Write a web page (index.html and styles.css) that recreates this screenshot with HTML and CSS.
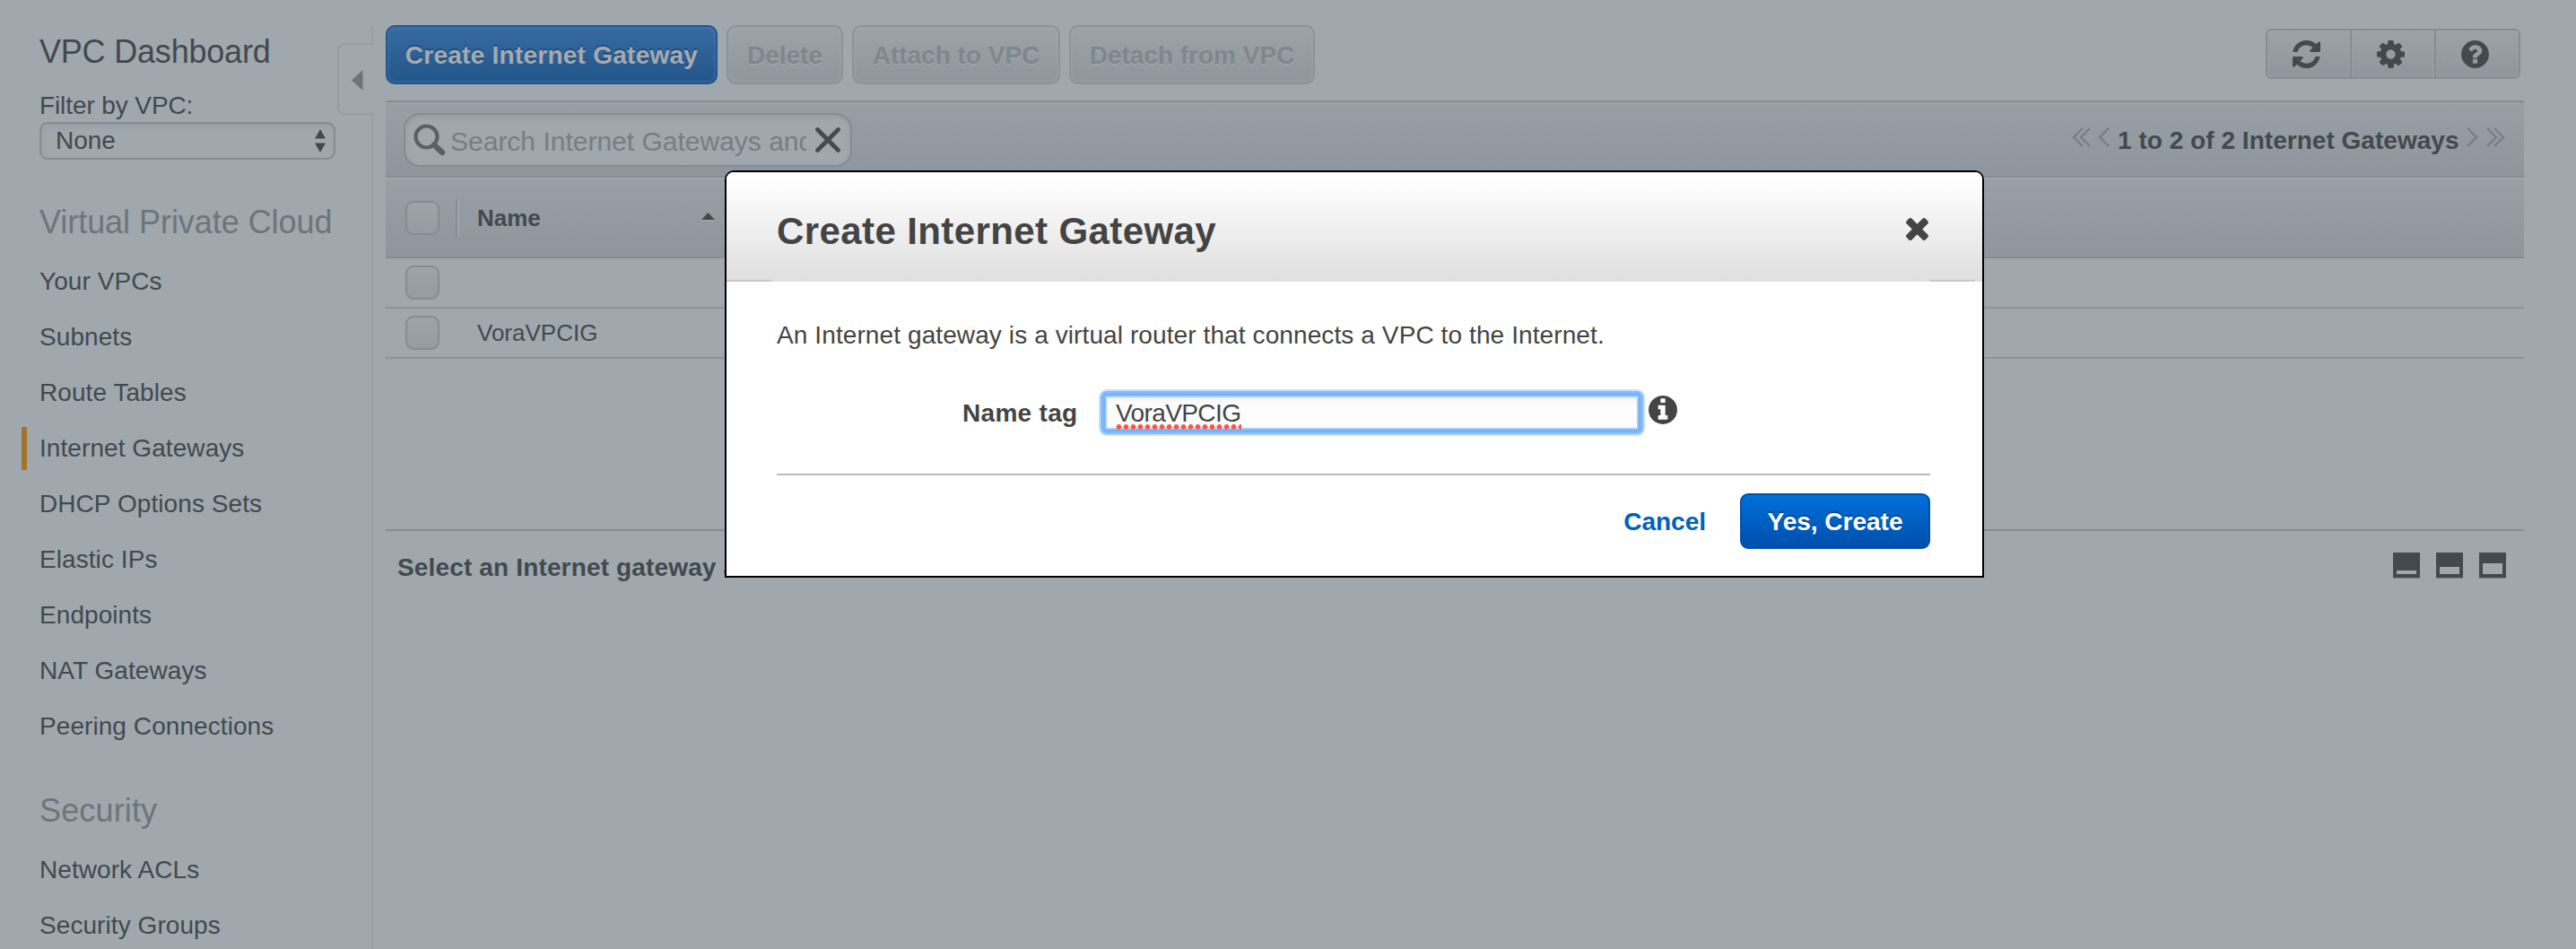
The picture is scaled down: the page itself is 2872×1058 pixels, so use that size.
FILE: index.html
```html
<!DOCTYPE html>
<html lang="en">
<head>
<meta charset="utf-8">
<title>VPC Dashboard</title>
<link rel="stylesheet" href="styles.css">
</head>
<body>
<div class="app">
  <aside class="sidebar">
    <div class="title">VPC Dashboard</div>
    <div class="filter-label">Filter by VPC:</div>
    <div class="select"><span>None</span>
      <svg width="14" height="26" viewBox="0 0 14 26"><path d="M7 0 13 10.500H1ZM1 15.500H13L7 26Z" fill="#42494f"/></svg>
    </div>
    <div class="collapse"><svg width="13" height="23" viewBox="0 0 13 23"><path d="M12.500 0V23L0 11.500Z" fill="#6d757c"/></svg></div>
    <h2 class="heading cloud">Virtual Private Cloud</h2>
    <nav class="nav">
      <a>Your VPCs</a>
      <a>Subnets</a>
      <a>Route Tables</a>
      <a class="active">Internet Gateways</a>
      <a>DHCP Options Sets</a>
      <a>Elastic IPs</a>
      <a>Endpoints</a>
      <a>NAT Gateways</a>
      <a>Peering Connections</a>
    </nav>
    <h2 class="heading security">Security</h2>
    <nav class="nav">
      <a>Network ACLs</a>
      <a>Security Groups</a>
    </nav>
  </aside>

  <main class="main">
    <div class="actions">
      <button class="btn primary">Create Internet Gateway</button>
      <button class="btn delete">Delete</button>
      <button class="btn attach">Attach to VPC</button>
      <button class="btn detach">Detach from VPC</button>
      <div class="tools">
        <span class="tool"><svg width="31" height="31" viewBox="0 0 1536 1536"><path d="M1511 928q0 5-1 7-64 268-268 434.500t-478 166.500q-146 0-282.500-55t-243.500-157l-129 129q-19 19-45 19t-45-19-19-45v-448q0-26 19-45t45-19h448q26 0 45 19t19 45-19 45l-137 137q71 66 161 102t187 36q134 0 250-65t186-179q11-17 53-117 8-23 30-23h192q13 0 22.500 9.500t9.500 22.500zm25-800v448q0 26-19 45t-45 19h-448q-26 0-45-19t-19-45 19-45l138-138q-148-137-349-137-134 0-250 65t-186 179q-11 17-53 117-8 23-30 23h-199q-13 0-22.500-9.500t-9.500-22.500v-7q65-268 270-434.500t480-166.500q146 0 284 55.500t245 156.500l130-129q19-19 45-19t45 19 19 45z"/></svg></span>
        <span class="tool"><svg width="31" height="31" viewBox="128 128 1536 1536"><path d="M1152 896q0-106-75-181t-181-75-181 75-75 181 75 181 181 75 181-75 75-181zm512-109v222q0 12-8 23t-20 13l-185 28q-19 54-39 91 35 50 107 138 10 12 10 25t-9 23q-27 37-99 108t-94 71q-12 0-26-9l-138-108q-44 23-91 38-16 136-29 186-7 28-36 28h-222q-14 0-24.500-8.500t-11.500-21.500l-28-184q-49-16-90-37l-141 107q-10 9-25 9-14 0-25-11-126-114-165-168-7-10-7-23 0-12 8-23 15-21 51-66.500t54-70.500q-27-50-41-99l-183-27q-13-2-21-12.500t-8-23.500v-222q0-12 8-23t19-13l186-28q14-46 39-92-40-57-107-138-10-12-10-24 0-10 9-23 26-36 98.500-107.500t94.500-71.500q13 0 26 10l138 107q44-23 91-38 16-136 29-186 7-28 36-28h222q14 0 24.500 8.500t11.500 21.500l28 184q49 16 90 37l142-107q9-9 24-9 13 0 25 10 129 119 165 170 7 8 7 22 0 12-8 23-15 21-51 66.500t-54 70.500q26 50 41 98l183 28q13 2 21 12.500t8 23.500z"/></svg></span>
        <span class="tool"><svg width="31" height="31" viewBox="128 128 1536 1536"><path d="M1024 1376v-192q0-14-9-23t-23-9h-192q-14 0-23 9t-9 23v192q0 14 9 23t23 9h192q14 0 23-9t9-23zm256-672q0-88-55.500-163t-138.500-116-170-41q-243 0-371 213-15 24 8 42l132 100q7 6 19 6 16 0 25-12 53-68 86-92 34-24 86-24 48 0 85.500 26t37.500 59q0 38-20 61t-68 45q-63 28-115.500 86.500t-52.500 125.500v36q0 14 9 23t23 9h192q14 0 23-9t9-23q0-19 21.500-49.500t54.500-49.500q32-18 49-28.500t46-35 44.500-48 28-60.500 12.500-81zm384 192q0 209-103 385.500t-279.500 279.500-385.500 103-385.500-103-279.500-279.500-103-385.500 103-385.500 279.500-279.500 385.500-103 385.500 103 279.500 279.500 103 385.500z"/></svg></span>
      </div>
    </div>

    <div class="filterbar">
      <div class="search">
        <svg class="lens" width="36" height="36" viewBox="0 0 36 36" fill="none" stroke="#596168"><circle cx="14.500" cy="14.500" r="12" stroke-width="4.200"/><path d="M23 23.500 32 32" stroke-width="6.500" stroke-linecap="round"/></svg>
        <span class="placeholder">Search Internet Gateways and their properties</span>
        <svg class="clear" width="28" height="28" viewBox="0 0 28 28"><path d="M2.500 2.500 25.500 25.500M25.500 2.500 2.500 25.500" stroke="#42494f" stroke-width="4.600" stroke-linecap="round"/></svg>
      </div>
      <div class="pager">
        <svg width="42" height="22" viewBox="0 0 42 22"><path d="M12 1 2 11 12 21M20 1 10 11 20 21M41 1 31 11 41 21"/></svg>
        <span>1 to 2 of 2 Internet Gateways</span>
        <svg width="44" height="22" viewBox="0 0 44 22"><path d="M1 1 11 11 1 21M23 1 33 11 23 21M31 1 41 11 31 21"/></svg>
      </div>
    </div>

    <div class="table">
      <div class="row head"><i class="check"></i><i class="divider"></i><span class="name">Name</span><svg class="sort" width="15" height="10" viewBox="0 0 15 10"><path d="M7.500 0 15 8H0Z" fill="#42494f"/><path d="M0 9H15" stroke="#a0a7ad" stroke-width="1.500"/></svg></div>
      <div class="row"><i class="check"></i></div>
      <div class="row"><i class="check"></i><span class="cell">VoraVPCIG</span></div>
    </div>

    <div class="details">
      <span class="prompt">Select an Internet gateway above</span>
      <div class="layouts">
        <svg width="30" height="29" viewBox="0 0 30 29"><path fill="#42494f" d="M0 0H30V28H0ZM4 20V24H26V20Z" fill-rule="evenodd"/><path fill="#7c848b" d="M0 28H30V29H0Z"/></svg>
        <svg width="30" height="29" viewBox="0 0 30 29"><path fill="#42494f" d="M0 0H30V28H0ZM4 16V24H26V16Z" fill-rule="evenodd"/><path fill="#7c848b" d="M0 28H30V29H0Z"/></svg>
        <svg width="30" height="29" viewBox="0 0 30 29"><path fill="#42494f" d="M0 0H30V28H0ZM4 12V24H26V12Z" fill-rule="evenodd"/><path fill="#7c848b" d="M0 28H30V29H0Z"/></svg>
      </div>
    </div>
  </main>
</div>

<section class="modal">
  <header class="modal-head">
    <h1>Create Internet Gateway</h1>
    <svg width="25" height="25" viewBox="302 366 1188 1188"><path fill="#444" d="M1490 1322q0 40-28 68l-136 136q-28 28-68 28t-68-28l-294-294-294 294q-28 28-68 28t-68-28l-136-136q-28-28-28-68t28-68l294-294-294-294q-28-28-28-68t28-68l136-136q28-28 68-28t68 28l294 294 294-294q28-28 68-28t68 28l136 136q28 28 28 68t-28 68l-294 294 294 294q28 28 28 68z"/></svg>
  </header>
  <div class="modal-body">
    <p class="intro">An Internet gateway is a virtual router that connects a VPC to the Internet.</p>
    <div class="field">
      <label>Name tag</label>
      <div class="input"><span>VoraVPCIG</span></div>
      <svg width="32" height="32" viewBox="128 128 1536 1536"><path fill="#444" d="M1152 1376v-160q0-14-9-23t-23-9h-96v-512q0-14-9-23t-23-9h-320q-14 0-23 9t-9 23v160q0 14 9 23t23 9h96v320h-96q-14 0-23 9t-9 23v160q0 14 9 23t23 9h448q14 0 23-9t9-23zm-128-896v-160q0-14-9-23t-23-9h-192q-14 0-23 9t-9 23v160q0 14 9 23t23 9h192q14 0 23-9t9-23zm640 416q0 209-103 385.500t-279.500 279.500-385.500 103-385.500-103-279.500-279.500-103-385.500 103-385.500 279.500-279.500 385.500-103 385.500 103 279.500 279.500 103 385.500z"/></svg>
    </div>
    <footer class="modal-foot">
      <a class="cancel">Cancel</a>
      <button class="confirm">Yes, Create</button>
    </footer>
  </div>
</section>
</body>
</html>
```
FILE: styles.css
```css
* { box-sizing: border-box; }

body {
  margin: 0;
  height: 1058px;
  overflow: hidden;
  position: relative;
  background: #a0a7ad;
  color: #42494f;
  font: 28px "Liberation Sans", Arial, sans-serif;
}

svg { display: block; flex: none; }
button { font: inherit; }

.app { display: flex; height: 1058px; overflow: hidden; }

/* Sidebar */
.sidebar {
  flex: none;
  width: 416px;
  height: 1030px;
  margin-top: 28px;
  padding-left: 44px;
  border-right: 2px solid #979ea5;
  position: relative;
  white-space: nowrap;
}
.title { font-size: 36px; line-height: 60px; letter-spacing: -0.2px; }
.filter-label { margin-top: 14px; line-height: 32px; letter-spacing: -0.1px; }
.select {
  display: flex;
  align-items: center;
  justify-content: space-between;
  width: 330px;
  height: 42px;
  margin-top: 2px;
  padding: 0 8px 0 16px;
  border: 2px solid #858c93;
  border-radius: 9px;
  box-shadow: inset 0 2px 5px rgba(125, 133, 140, 0.35);
  line-height: 38px;
}
.collapse {
  position: absolute;
  top: 20px;
  right: -2px;
  width: 40px;
  height: 80px;
  padding: 28px 0 0 14px;
  background: #a0a7ad;
  border: 2px solid #959ca3;
  border-right: 0;
  border-radius: 8px 0 0 8px;
}
.heading {
  margin: 0;
  font-size: 36px;
  font-weight: normal;
  line-height: 44px;
  color: #6d757c;
}
.cloud { margin-top: 48px; margin-bottom: 13px; letter-spacing: -0.05px; }
.security { margin-top: 41px; margin-bottom: 13px; letter-spacing: 0.15px; }
.nav { display: flex; flex-direction: column; letter-spacing: 0.07px; }
.nav a {
  display: flex;
  align-items: center;
  height: 62px;
  margin-left: -20px;
  padding-left: 20px;
}
.nav .active { position: relative; }
.nav .active::before {
  content: "";
  position: absolute;
  left: 0;
  top: 7px;
  width: 6px;
  height: 48px;
  background: #a1752e;
}

/* Main column */
.main { flex: 1; padding: 28px 58px 0 14px; }
.actions { display: flex; height: 84px; align-items: flex-start; gap: 10px; }
.btn {
  height: 66px;
  padding: 2px 0 0;
  border: 2px solid #8c949b;
  border-radius: 10px;
  background: linear-gradient(#9ca3a9, #8e959c);
  box-shadow: inset 0 0 6px rgba(160, 167, 173, 0.8);
  color: #7f878e;
  font-weight: bold;
  text-shadow: 0 2px 0 #9ba2a9;
  white-space: nowrap;
}
.primary {
  width: 370px;
  border-color: #215791;
  background: linear-gradient(#366ba2, #235589);
  box-shadow: inset 0 0 5px rgba(105, 145, 185, 0.5);
  color: #a4abb2;
  text-shadow: 0 -2px 0 #234e7c;
  letter-spacing: 0.25px;
}
.delete { width: 130px; }
.attach { width: 232px; }
.detach { width: 274px; }
.tools {
  display: flex;
  margin: 4px 4px 0 auto;
  width: 284px;
  height: 56px;
  border: 2px solid #858c93;
  border-radius: 6px;
  background: linear-gradient(#9ca3a9, #8e959c);
}
.tool {
  flex: 1;
  display: flex;
  align-items: center;
  justify-content: center;
  padding-right: 5px;
  fill: #42494f;
  box-shadow: inset 0 0 5px rgba(160, 167, 173, 0.7);
}
.tool + .tool { border-left: 2px solid #858c93; }

.filterbar {
  display: flex;
  align-items: center;
  justify-content: space-between;
  height: 86px;
  padding: 0 20px;
  border-top: 2px solid #858c93;
  border-bottom: 2px solid #858c93;
  background: linear-gradient(#989fa6, #8e959c);
}
.search {
  display: flex;
  align-items: center;
  width: 500px;
  height: 60px;
  margin-top: 2px;
  padding: 0 10px 0 9px;
  border: 2px solid #858c93;
  border-radius: 18px;
  background: #a0a7ad;
  box-shadow: inset 0 2px 5px rgba(125, 133, 140, 0.4);
}
.placeholder {
  width: 397px;
  margin-left: 5px;
  overflow: hidden;
  white-space: nowrap;
  font-size: 30px;
  line-height: 40px;
  padding-top: 3px;
  color: #767e85;
}
.clear { margin-left: 10px; }
.pager { display: flex; align-items: center; font-weight: bold; letter-spacing: 0.03px; }
.pager span { width: 389px; margin: 3px 0 0 9px; white-space: nowrap; }
.pager svg { margin-top: -4px; fill: none; stroke: #788087; stroke-width: 2.4; }

/* Gateway table */
.table { height: 394px; padding-top: 2px; border-bottom: 2px solid #858c93; }
.row {
  display: flex;
  align-items: center;
  height: 56px;
  padding: 0 0 0 22px;
  border-bottom: 2px solid #8c949b;
  font-size: 26px;
}
.row.head {
  height: 88px;
  border-color: #858c93;
  background: linear-gradient(#989fa6, #8e959c);
}
.check {
  width: 38px;
  height: 38px;
  border: 2px solid #858c93;
  border-radius: 9px;
  background: linear-gradient(#9da4aa, #949ba2);
}
.divider {
  width: 4px;
  height: 42px;
  margin-left: 18px;
  background: linear-gradient(90deg, #858c93 50%, #a0a7ad 50%);
}
.name { width: 250px; margin: 0 0 0 20px; font-weight: bold; }
.sort { margin-top: -2px; }
.cell { margin-left: 42px; padding-top: 1px; }

.details { display: flex; justify-content: space-between; padding: 24px 20px 0 13px; font-weight: bold; }
.prompt { line-height: 40px; margin-top: -3px; letter-spacing: 0.15px; }
.layouts { display: flex; gap: 18px; }

/* Dialog */
.modal {
  position: absolute;
  left: 808px;
  top: 190px;
  width: 1404px;
  height: 454px;
  border: 2px solid #000;
  border-radius: 10px 10px 0 0;
  background: #fff;
  color: #444;
  overflow: hidden;
}
.modal-head {
  display: flex;
  align-items: center;
  justify-content: space-between;
  height: 122px;
  padding: 0 60px 4px 56px;
  background:
    linear-gradient(#c8c8c8, #c8c8c8) 0 100% / 50px 2px no-repeat,
    linear-gradient(#c8c8c8, #c8c8c8) 1342px 100% / 50px 2px no-repeat,
    linear-gradient(#fff 5%, #dfdfdf);
}
.modal-head svg { margin-top: 9px; }
.modal-head h1 { margin: 0; padding-top: 13px; font-size: 42px; line-height: 50px; letter-spacing: 0.4px; }
.modal-body { padding: 0 58px 0 56px; }
.intro { margin: 40px 0 0; line-height: 40px; letter-spacing: 0.1px; }
.field { display: flex; align-items: center; height: 64px; margin-top: 33px; }
.field label { width: 157px; margin-left: 207px; padding-top: 3px; font-weight: bold; letter-spacing: 0.3px; }
.input {
  width: 599px;
  height: 42px;
  margin-top: 1px;
  padding-left: 12px;
  border: 2px solid #75aeee;
  border-radius: 4px;
  background: #fcfcfc;
  box-shadow: 0 0 0 3px #82bcff, 0 0 0 5px #c4e0ff, inset 0 0 0 2px #a6cdfa, inset 0 4px 4px #ececec;
  line-height: 40px;
}
.input span {
  display: inline-block;
  height: 38px;
  letter-spacing: -0.6px;
  background: radial-gradient(circle at 3.500px 3px, #ff5044 2px, #ff7a70 2.700px, transparent 3.400px) 0 100% / 8px 6px repeat-x;
  padding-right: 1px;
}
.field svg { margin: -4px 0 0 9px; }
.modal-foot {
  display: flex;
  align-items: flex-start;
  justify-content: flex-end;
  gap: 38px;
  height: 104px;
  margin-top: 37px;
  padding-top: 20px;
  border-top: 2px solid #bbb;
  font-weight: bold;
}
.cancel { color: #0060be; line-height: 64px; }
.confirm {
  width: 212px;
  height: 62px;
  padding: 2px 0 0;
  border: 2px solid #0050ac;
  border-radius: 9px;
  background: linear-gradient(#0070da, #004fac);
  color: #fff;
  font-weight: bold;
  text-shadow: 0 -2px 0 #00469a;
}
```
